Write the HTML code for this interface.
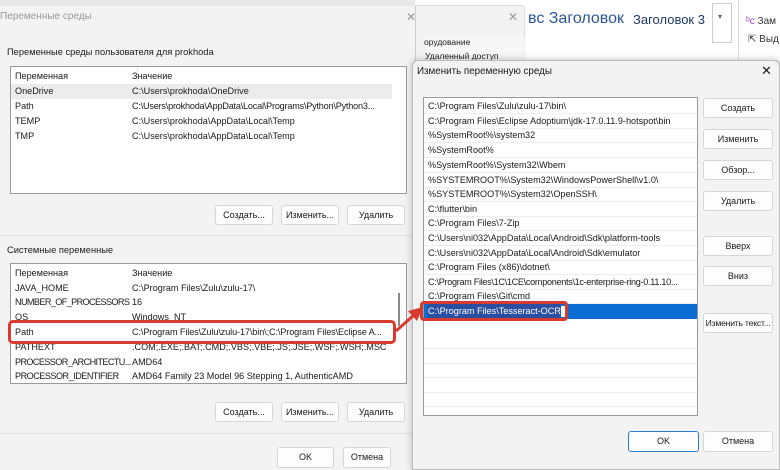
<!DOCTYPE html>
<html><head><meta charset="utf-8"><style>
*{margin:0;padding:0;box-sizing:border-box}
body{width:780px;height:470px;overflow:hidden;background:#f3f3f3;font-family:"Liberation Sans",sans-serif;font-size:9.1px;color:#1a1a1a;position:relative}
.a{position:absolute;white-space:nowrap}
.btn{position:absolute;background:#fdfdfd;border:1px solid #d6d6d6;border-radius:3px;text-align:center;font-size:9px;color:#1a1a1a;white-space:nowrap;overflow:hidden}
.box{position:absolute;background:#fff;border:1px solid #9a9a9a}
.row{position:absolute;left:0;right:0;height:15px;line-height:15px}
</style></head><body>
<div class="a" style="left:0;top:0;width:780px;height:6px;background:#e8e8e8"></div>
<div class="a" style="left:415px;top:0;width:365px;height:60px;background:#fff"></div>
<div class="a" style="left:413px;top:5px;width:112px;height:58px;background:#f3f3f3;border:1px solid #ddd;border-radius:4px"></div>
<div class="a" style="left:426px;top:38px;width:100px;height:25px;background:#f7f7f7"></div>
<div class="a" style="left:424px;top:37px;font-size:8.5px">орудование</div>
<div class="a" style="left:425px;top:51px;font-size:8.5px">Удаленный доступ</div>
<div class="a" style="left:508px;top:10px;color:#999;font-size:12px">✕</div>
<div class="a" style="left:528px;top:10px;font-size:16px;color:#2b579a">вс Заголовок</div>
<div class="a" style="left:633px;top:12px;font-size:13px;color:#1f3864">Заголовок 3</div>
<div class="a" style="left:712px;top:3px;width:20px;height:40px;border:1px solid #ccc;background:#fff"></div>
<div class="a" style="left:718px;top:12px;font-size:8px;color:#666">▾</div>
<div class="a" style="left:738px;top:0;width:1px;height:60px;background:#ddd"></div>
<div class="a" style="left:746px;top:16px;font-size:10px;color:#333"><span style="color:#a33ecf">ᵇc</span> Зам</div>
<div class="a" style="left:748px;top:34px;font-size:10px;color:#333">⇱ Выд</div>
<div class="a" style="left:0;top:6px;width:416px;height:464px;background:#f3f3f3;border-right:1px solid #ccc"></div>
<div class="a" style="left:0;top:11px;font-size:10px;color:#999">Переменные среды</div>
<div class="a" style="left:406px;top:10px;font-size:12px;color:#999">✕</div>
<div class="a" style="left:7px;top:47px;font-size:9.3px">Переменные среды пользователя для prokhoda</div>
<div class="box" style="left:10px;top:66px;width:397px;height:128px">
 <div class="row" style="top:2px"><span class="a" style="left:4px">Переменная</span><span class="a" style="left:121px">Значение</span></div>
 <div class="a" style="left:126px;top:0;width:1px;height:15px;background:#e5e5e5"></div>
 <div class="row" style="top:17px;background:#ececec;right:14px"><span class="a" style="left:4px">OneDrive</span><span class="a" style="left:121px">C:\Users\prokhoda\OneDrive</span></div>
 <div class="row" style="top:32px"><span class="a" style="left:4px">Path</span><span class="a" style="left:121px;letter-spacing:-0.2px">C:\Users\prokhoda\AppData\Local\Programs\Python\Python3...</span></div>
 <div class="row" style="top:47px"><span class="a" style="left:4px">TEMP</span><span class="a" style="left:121px">C:\Users\prokhoda\AppData\Local\Temp</span></div>
 <div class="row" style="top:62px"><span class="a" style="left:4px">TMP</span><span class="a" style="left:121px">C:\Users\prokhoda\AppData\Local\Temp</span></div>
</div>
<div class="btn" style="left:215px;top:205px;width:58px;height:20px;line-height:18px">Создать...</div>
<div class="btn" style="left:281px;top:205px;width:58px;height:20px;line-height:18px">Изменить...</div>
<div class="btn" style="left:347px;top:205px;width:58px;height:20px;line-height:18px">Удалить</div>
<div class="a" style="left:0;top:235px;width:416px;height:1px;background:#e2e2e2"></div>
<div class="a" style="left:7px;top:245px;font-size:9.3px">Системные переменные</div>
<div class="box" style="left:10px;top:263px;width:397px;height:121px;overflow:hidden">
 <div class="row" style="top:2px"><span class="a" style="left:4px">Переменная</span><span class="a" style="left:121px">Значение</span></div>
 <div class="row" style="top:17px"><span class="a" style="left:4px">JAVA_HOME</span><span class="a" style="left:121px">C:\Program Files\Zulu\zulu-17\</span></div>
 <div class="row" style="top:31px"><span class="a" style="left:4px;letter-spacing:-0.6px">NUMBER_OF_PROCESSORS</span><span class="a" style="left:121px">16</span></div>
 <div class="row" style="top:46px"><span class="a" style="left:4px">OS</span><span class="a" style="left:121px">Windows_NT</span></div>
 <div class="row" style="top:61px"><span class="a" style="left:4px">Path</span><span class="a" style="left:121px;letter-spacing:-0.1px">C:\Program Files\Zulu\zulu-17\bin\;C:\Program Files\Eclipse A...</span></div>
 <div class="row" style="top:76px"><span class="a" style="left:4px">PATHEXT</span><span class="a" style="left:121px">.COM;.EXE;.BAT;.CMD;.VBS;.VBE;.JS;.JSE;.WSF;.WSH;.MSC</span></div>
 <div class="row" style="top:91px"><span class="a" style="left:4px;letter-spacing:-0.6px">PROCESSOR_ARCHITECTU...</span><span class="a" style="left:121px">AMD64</span></div>
 <div class="row" style="top:105px"><span class="a" style="left:4px;letter-spacing:-0.5px">PROCESSOR_IDENTIFIER</span><span class="a" style="left:121px">AMD64 Family 23 Model 96 Stepping 1, AuthenticAMD</span></div>
 <div class="row" style="top:119px"><span class="a" style="left:4px">PROCESSOR_LEVEL</span><span class="a" style="left:121px">23</span></div>
 <div class="a" style="left:387px;top:29px;width:2px;height:33px;background:#8a8a8a"></div>
</div>
<div class="a" style="left:8px;top:320px;width:388px;height:24px;border:3px solid #d93a2f;border-radius:5px"></div>
<div class="btn" style="left:215px;top:402px;width:58px;height:20px;line-height:18px">Создать...</div>
<div class="btn" style="left:281px;top:402px;width:58px;height:20px;line-height:18px">Изменить...</div>
<div class="btn" style="left:347px;top:402px;width:58px;height:20px;line-height:18px">Удалить</div>
<div class="a" style="left:0;top:433px;width:416px;height:1px;background:#e2e2e2"></div>
<div class="btn" style="left:277px;top:447px;width:57px;height:21px;line-height:19px">OK</div>
<div class="btn" style="left:343px;top:447px;width:48px;height:21px;line-height:19px">Отмена</div>
<div class="a" style="left:412px;top:60px;width:368px;height:410px;background:#f3f3f3;border:1px solid #bbb;border-radius:6px 6px 0 0;box-shadow:0 0 8px rgba(0,0,0,.25)"></div>
<div class="a" style="left:417px;top:66px;font-size:9.8px">Изменить переменную среды</div>
<div class="a" style="left:761px;top:63px;font-size:13px">✕</div>
<div class="box" style="left:423px;top:97px;width:275px;height:319px;overflow:hidden">
 <div class="row" style="top:1px;border-bottom:1px solid #eee"><span class="a" style="left:4px">C:\Program Files\Zulu\zulu-17\bin\</span></div>
 <div class="row" style="top:16px;border-bottom:1px solid #eee"><span class="a" style="left:4px">C:\Program Files\Eclipse Adoptium\jdk-17.0.11.9-hotspot\bin</span></div>
 <div class="row" style="top:30px;border-bottom:1px solid #eee"><span class="a" style="left:4px">%SystemRoot%\system32</span></div>
 <div class="row" style="top:45px;border-bottom:1px solid #eee"><span class="a" style="left:4px">%SystemRoot%</span></div>
 <div class="row" style="top:60px;border-bottom:1px solid #eee"><span class="a" style="left:4px">%SystemRoot%\System32\Wbem</span></div>
 <div class="row" style="top:75px;border-bottom:1px solid #eee"><span class="a" style="left:4px">%SYSTEMROOT%\System32\WindowsPowerShell\v1.0\</span></div>
 <div class="row" style="top:89px;border-bottom:1px solid #eee"><span class="a" style="left:4px">%SYSTEMROOT%\System32\OpenSSH\</span></div>
 <div class="row" style="top:104px;border-bottom:1px solid #eee"><span class="a" style="left:4px">C:\flutter\bin</span></div>
 <div class="row" style="top:118px;border-bottom:1px solid #eee"><span class="a" style="left:4px">C:\Program Files\7-Zip</span></div>
 <div class="row" style="top:133px;border-bottom:1px solid #eee"><span class="a" style="left:4px">C:\Users\ni032\AppData\Local\Android\Sdk\platform-tools</span></div>
 <div class="row" style="top:148px;border-bottom:1px solid #eee"><span class="a" style="left:4px">C:\Users\ni032\AppData\Local\Android\Sdk\emulator</span></div>
 <div class="row" style="top:162px;border-bottom:1px solid #eee"><span class="a" style="left:4px">C:\Program Files (x86)\dotnet\</span></div>
 <div class="row" style="top:177px;border-bottom:1px solid #eee;overflow:hidden"><span class="a" style="left:4px;letter-spacing:-0.3px">C:\Program Files\1C\1CE\components\1c-enterprise-ring-0.11.10...</span></div>
 <div class="row" style="top:191px;border-bottom:1px solid #eee"><span class="a" style="left:4px">C:\Program Files\Git\cmd</span></div>
 <div class="row" style="top:206px;background:#0a6cd1;color:#fff"><span class="a" style="left:4px;background:#2a4ea0">C:\Program Files\Tesseract-OCR</span><span class="a" style="left:137px;top:2px;width:6px;height:11px;background:#fff"></span></div>
 <div class="row" style="top:236px;border-bottom:1px solid #eee"></div>
 <div class="row" style="top:251px;border-bottom:1px solid #eee"></div>
 <div class="row" style="top:265px;border-bottom:1px solid #eee"></div>
 <div class="row" style="top:280px;border-bottom:1px solid #eee"></div>
 <div class="row" style="top:294px;border-bottom:1px solid #eee"></div>
</div>
<div class="a" style="left:420px;top:301px;width:148px;height:20px;border:3px solid #d93a2f;border-radius:4px"></div>
<svg class="a" style="left:390px;top:300px" width="40" height="40"><line x1="6" y1="31" x2="24" y2="15" stroke="#d93a2f" stroke-width="3"/><polygon points="33,7 18,11 27,21" fill="#d93a2f"/></svg>
<div class="btn" style="left:703px;top:98px;width:70px;height:20px;line-height:18px">Создать</div>
<div class="btn" style="left:703px;top:129px;width:70px;height:20px;line-height:18px">Изменить</div>
<div class="btn" style="left:703px;top:160px;width:70px;height:20px;line-height:18px">Обзор...</div>
<div class="btn" style="left:703px;top:191px;width:70px;height:20px;line-height:18px">Удалить</div>
<div class="btn" style="left:703px;top:236px;width:70px;height:20px;line-height:18px">Вверх</div>
<div class="btn" style="left:703px;top:266px;width:70px;height:20px;line-height:18px">Вниз</div>
<div class="btn" style="left:703px;top:313px;width:70px;height:20px;line-height:18px;font-size:8.6px;letter-spacing:-0.2px">Изменить текст...</div>
<div class="btn" style="left:628px;top:431px;width:71px;height:21px;line-height:19px;border-color:#2b7bd3">OK</div>
<div class="btn" style="left:703px;top:431px;width:70px;height:21px;line-height:19px">Отмена</div>
</body></html>
